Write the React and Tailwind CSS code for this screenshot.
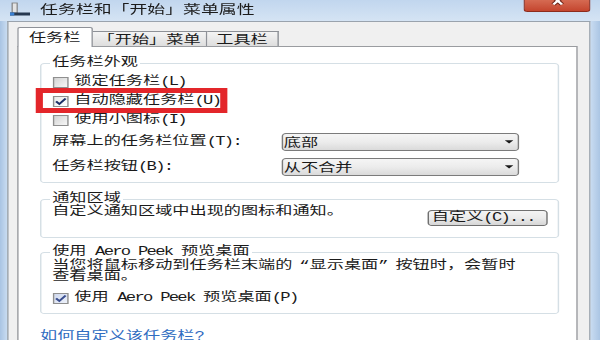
import React from "react";

function T({ s }) {
  const parts = s.match(/[\x00-\x7f]+|[^\x00-\x7f]+/g) || [];
  return parts.map((p, i) =>
    /^[\x00-\x7f]/.test(p) ? (
      <span key={i} className="tracking-[-1.2px]">{p}</span>
    ) : (
      <span key={i}>{p}</span>
    )
  );
}

function Box({ checked, tint }) {
  const bg = tint
    ? "bg-linear-to-br from-[#cfd8ee] to-[#eef2fb]"
    : checked
    ? "bg-linear-to-br from-[#e9e9e9] to-[#ffffff]"
    : "bg-linear-to-br from-[#d4d4d4] to-[#f7f7f7]";
  return (
    <span className={`w-[11px] h-[11px] shrink-0 border border-[#8f8f8f] flex items-center justify-center ${bg}`}>
      {checked && (
        <svg width="9" height="9" viewBox="0 0 9 9">
          <path d="M1.2 4.4 L3.5 7 L7.9 1.5" fill="none" stroke={tint ? "#3b4f8f" : "#1d2f66"} strokeWidth="1.7" />
        </svg>
      )}
    </span>
  );
}

function CheckRow({ text, checked, tint, children }) {
  return (
    <div className="relative h-[19px] flex items-center">
      <span className="ml-[2px] mr-[4px] flex">
        <Box checked={checked} tint={tint} />
      </span>
      <span className="leading-[12px]">
        <T s={text} />
      </span>
      {children}
    </div>
  );
}

function Combo({ text }) {
  return (
    <div className="w-[166.5px] h-[18px] border border-[#7b7b7b] rounded-[3px] bg-linear-to-b from-[#f5f5f5] via-[#ececec] to-[#dadada] flex items-center pl-[1px] pr-[3.5px] font-['Noto_Sans_CJK_SC',sans-serif]">
      <span className="flex-1 leading-[12px]">{text}</span>
      <svg width="6" height="4" viewBox="0 0 6 4">
        <path d="M0 0.3H6L3 3.6Z" fill="#1a1a1a" />
      </svg>
    </div>
  );
}

export default function App() {
  return (
    <div className="w-[600px] h-[340px] overflow-hidden bg-[#c4d9ef]">
      <div className="w-[420px] h-[340px] origin-top-left scale-x-[1.43] flex flex-col text-[12px] text-[#1a1a1a] font-['Liberation_Mono','Noto_Sans_CJK_SC',monospace]">
        {/* Title bar */}
        <div className="h-[21px] shrink-0 flex items-start bg-linear-to-b from-[#c1d6ee] to-[#d5e4f4]">
          <svg className="ml-[7px] mt-[2px] shrink-0" width="14" height="14" viewBox="0 0 14 14">
            <rect x="1.5" y="1" width="3.5" height="10" fill="#e4e4e4" stroke="#7d7d7d" strokeWidth="0.8" />
            <rect x="0" y="10.5" width="14" height="3" fill="#263850" />
            <rect x="0" y="10.5" width="3" height="3" fill="#3a80d2" />
          </svg>
          <span className="ml-[7px] mt-[2px] text-[12.5px] leading-[14px] font-['Noto_Sans_CJK_SC',sans-serif] text-[#1c1c1c]">
            任务栏和「开始」菜单属性
          </span>
          <div className="ml-auto mr-[6.7px] w-[47.6px] h-[12px] rounded-b-[3px] border border-t-0 border-[#8d2b1c] bg-linear-to-b from-[#d56a52] to-[#c4452e] overflow-hidden">
            <svg width="46" height="11" viewBox="0 0 46 11">
              <path d="M20 -3 L26 4.5 M26 -3 L20 4.5" stroke="#6a2014" strokeWidth="3.6" />
              <path d="M20 -3 L26 4.5 M26 -3 L20 4.5" stroke="#ffffff" strokeWidth="2" />
            </svg>
          </div>
        </div>

        {/* Body */}
        <div className="flex-1 flex">
          <div className="w-[5px] bg-linear-to-r from-[#a9c4e3] to-[#c9dcf1]" />
          <div className="flex-1 flex flex-col bg-[#f0f0f0] border-l border-t border-r border-[#9aa3ad] pt-[5px] pl-[6px]">
            {/* Tabs */}
            <div className="relative z-10 h-[19px] shrink-0 flex items-end font-['Noto_Sans_CJK_SC',sans-serif]">
              <div className="w-[52.5px] h-[20px] -mb-px bg-white border border-b-0 border-[#8e9197] rounded-t-[2px] flex justify-center pt-[3px] leading-[12px]">
                任务栏
              </div>
              <div className="w-[80.5px] h-[15px] bg-linear-to-b from-[#f4f4f4] to-[#dedede] border border-b-0 border-l-0 border-[#8e9197] flex items-center justify-center leading-[12px]">
                「开始」菜单
              </div>
              <div className="w-[49.5px] h-[15px] bg-linear-to-b from-[#f4f4f4] to-[#dedede] border border-b-0 border-l-0 border-[#8e9197] flex items-center justify-center leading-[12px]">
                工具栏
              </div>
            </div>

            {/* Panel */}
            <div className="w-[391.5px] flex-1 bg-white border border-[#9a9ca0] pl-[15px] pr-[11.5px]">
              {/* Group 1 */}
              <fieldset className="mt-[10px] border border-[#d5dfe5] rounded-[3px] px-[6px] pb-[6px]">
                <legend className="px-[1.5px] leading-[12px]">任务栏外观</legend>
                <div className="pt-[3.5px]">
                  <CheckRow text="锁定任务栏(L)" />
                  <CheckRow text="自动隐藏任务栏(U)" checked>
                    <div className="absolute left-[-10.5px] top-[-4px] w-[134px] h-[25px] border-[5px] border-[#e3262a] z-10 pointer-events-none" />
                  </CheckRow>
                  <CheckRow text="使用小图标(I)" />
                  <div className="mt-[3.5px] h-[18px] flex items-center">
                    <span className="w-[161.5px] pl-[1.5px] leading-[12px]">
                      <T s="屏幕上的任务栏位置(T):" />
                    </span>
                    <Combo text="底部" />
                  </div>
                  <div className="mt-[7px] h-[18px] flex items-center">
                    <span className="w-[161.5px] pl-[1.5px] leading-[12px]">
                      <T s="任务栏按钮(B):" />
                    </span>
                    <Combo text="从不合并" />
                  </div>
                </div>
              </fieldset>

              {/* Group 2 */}
              <fieldset className="mt-[10px] border border-[#d5dfe5] rounded-[3px] px-[6px] pb-[11px]">
                <legend className="px-[1.5px] leading-[12px]">通知区域</legend>
                <div className="pt-[1px] flex items-start justify-between">
                  <span className="ml-[1.5px] leading-[12px]">
                    <T s="自定义通知区域中出现的图标和通知。" />
                  </span>
                  <div className="mt-[4px] mr-[1px] w-[84.5px] h-[16px] border border-[#707070] rounded-[3px] bg-linear-to-b from-[#f4f4f4] via-[#ebebeb] to-[#d6d6d6] flex items-center pl-[2.5px] leading-[12px]">
                    <T s="自定义(C)..." />
                  </div>
                </div>
              </fieldset>

              {/* Group 3 */}
              <fieldset className="mt-[8px] border border-[#d5dfe5] rounded-[3px] px-[6px] pb-[5px]">
                <legend className="px-[1.5px] leading-[12px]">
                  <T s="使用 Aero Peek 预览桌面" />
                </legend>
                <p className="pt-[2.5px] ml-[1.5px] leading-[11.5px]">
                  当您将鼠标移动到任务栏末端的
                  <span className="inline-block w-[12px] text-right">“</span>
                  显示桌面
                  <span className="inline-block w-[12px] text-left">”</span>
                  按钮时，会暂时
                  <br />
                  查看桌面。
                </p>
                <div className="mt-[5px]">
                  <CheckRow text="使用 Aero Peek 预览桌面(P)" checked tint />
                </div>
              </fieldset>

              <div className="mt-[17px] leading-[12px] text-[#2f6cc1]">
                <T s="如何自定义该任务栏?" />
              </div>
            </div>
          </div>
          <div className="w-[7px] bg-linear-to-r from-[#c9dcf1] to-[#a9c4e3]" />
        </div>
      </div>
    </div>
  );
}
